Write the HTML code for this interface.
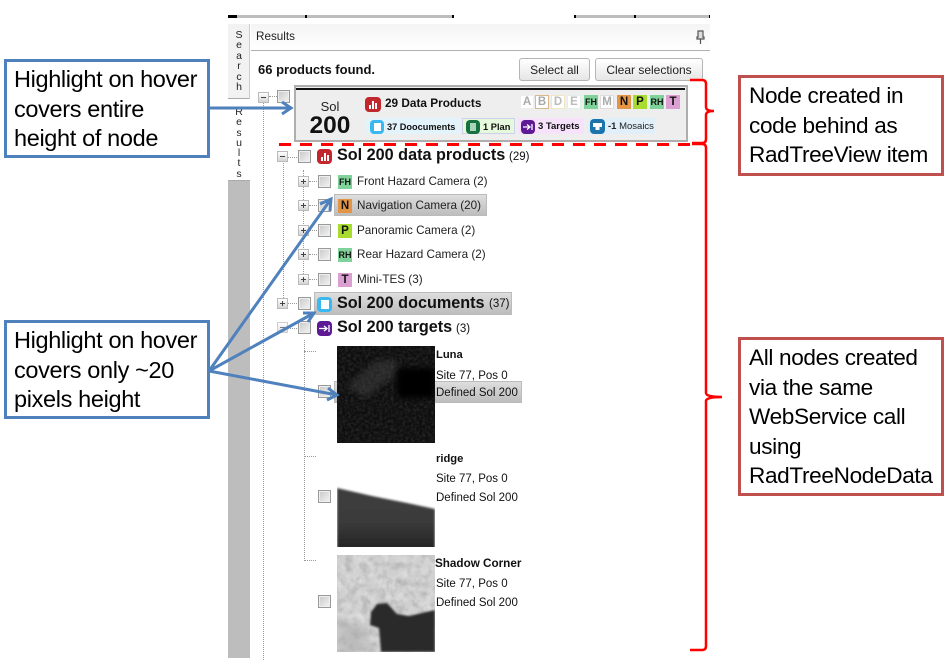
<!DOCTYPE html>
<html><head><meta charset="utf-8"><style>
html,body{margin:0;padding:0;background:#fff}
#p{position:relative;width:952px;height:664px;overflow:hidden;background:#fff;font-family:"Liberation Sans",sans-serif;color:#111}
#p div,#p span.a,#p svg{position:absolute}
.t{white-space:nowrap;line-height:14px}
.s{font-size:11.7px}
.b{font-weight:bold}
.call{box-sizing:border-box;background:#fff;font-size:23.5px;line-height:29.5px;color:#000;padding:3px 0 0 7px;white-space:nowrap;letter-spacing:-.35px}
.rc{font-size:22.6px;padding-left:8px}
.ck{box-sizing:border-box;width:13px;height:13px;border:1px solid #999;background:linear-gradient(135deg,#c8c8c8,#f4f4f4);box-shadow:inset 0 0 0 1px #eee}
.ex{box-sizing:border-box;width:11px;height:11px;border:1px solid #bbb;background:linear-gradient(#fff,#d4d4d4)}
.ex:after{content:"";position:absolute;left:2px;top:4px;width:5px;height:1px;background:#444}
.ex.pl:before{content:"";position:absolute;left:4px;top:2px;width:1px;height:5px;background:#444}
.ic{width:14px;height:14px;font-size:10px;font-weight:bold;text-align:center;line-height:14px;color:#111}
.bd{box-sizing:border-box;width:14px;height:14px;font-size:11.500px;font-weight:bold;text-align:center;line-height:14px;color:#111}
.lt{color:#aaa;background:#fff;line-height:12px}
.hv{box-sizing:border-box;border:1px solid #bbb;background:linear-gradient(#dedede,#bdbdbd)}
.btn{box-sizing:border-box;border:1px solid #b5b5b5;border-radius:3px;background:linear-gradient(#fff,#e6e6e6);font-size:12px;text-align:center;line-height:22px;color:#222}
.chip{height:16px}
.r{border-radius:4px}
.dv{width:0;border-left:1px dotted #999}
.dh{height:0;border-top:1px dotted #999}
</style></head><body><div id="p">

<!-- top strip -->
<div style="left:228px;top:15px;width:225px;height:3px;background:#bdbdbd"></div>
<div style="left:574px;top:15px;width:136px;height:3px;background:#bdbdbd"></div>
<div style="left:228px;top:15px;width:9px;height:3px;background:#000"></div>
<div style="left:305px;top:15px;width:2px;height:3px;background:#000"></div>
<div style="left:452px;top:15px;width:2px;height:3px;background:#000"></div>
<div style="left:574px;top:15px;width:2px;height:3px;background:#000"></div>
<div style="left:634px;top:15px;width:2px;height:3px;background:#000"></div>
<div style="left:709px;top:15px;width:1px;height:3px;background:#000"></div>

<!-- side rail -->
<div style="left:228px;top:24px;width:22px;height:634px;background:#bdbdbd"></div>
<div style="left:228px;top:24px;width:21px;height:74px;background:#f2f2f2"></div>
<div style="left:228px;top:98px;width:21px;height:1px;background:#aaa"></div>
<div style="left:228px;top:99px;width:22px;height:81px;background:#fff"></div>
<div style="left:228px;top:180px;width:22px;height:1px;background:#aaa"></div>
<div style="left:249px;top:24px;width:1px;height:75px;background:#ccc"></div>
<div style="left:228px;top:30px;width:22px;text-align:center;font-size:10.500px;line-height:10.400px;color:#222">S<br>e<br>a<br>r<br>c<br>h</div>
<div style="left:228px;top:107px;width:22px;text-align:center;font-size:10.500px;line-height:10.300px;color:#222">R<br>e<br>s<br>u<br>l<br>t<br>s</div>

<!-- header -->
<div style="left:251px;top:24px;width:459px;height:26px;background:linear-gradient(#f4f4f4,#fff)"></div>
<div style="left:251px;top:50px;width:459px;height:1px;background:#b0b0b0"></div>
<div class="t" style="left:256px;top:30px;font-size:11.700px;color:#222">Results</div>
<svg style="left:695px;top:30px" width="11" height="15" viewBox="0 0 11 15"><path d="M3 1h5v6h1v2H2V7h1zM5.500 9v5" fill="#ddd" stroke="#555" stroke-width="1.200"/></svg>

<div class="t b" style="left:258px;top:63px;font-size:13px">66 products found.</div>
<div class="btn" style="left:519px;top:58px;width:71px;height:23px">Select all</div>
<div class="btn" style="left:595px;top:58px;width:108px;height:23px">Clear selections</div>

<!-- dotted tree lines -->
<div class="dv" style="left:263px;top:103px;height:557px"></div>
<div class="dh" style="left:269px;top:96px;width:8px"></div>
<div class="dv" style="left:283px;top:163px;height:135px"></div>
<div class="dh" style="left:288px;top:157px;width:9px"></div>
<div class="dh" style="left:288px;top:303px;width:9px"></div>
<div class="dh" style="left:288px;top:328px;width:9px"></div>
<div class="dv" style="left:303px;top:170px;height:110px"></div>
<div class="dh" style="left:309px;top:181px;width:8px"></div>
<div class="dh" style="left:309px;top:205px;width:8px"></div>
<div class="dh" style="left:309px;top:230px;width:8px"></div>
<div class="dh" style="left:309px;top:254px;width:8px"></div>
<div class="dh" style="left:309px;top:279px;width:8px"></div>
<div class="dv" style="left:304px;top:340px;height:221px"></div>
<div class="dh" style="left:304px;top:351px;width:12px"></div>
<div class="dh" style="left:304px;top:456px;width:12px"></div>
<div class="dh" style="left:304px;top:560px;width:12px"></div>

<!-- root node -->
<div class="ex" style="left:258px;top:92px"></div>
<div class="ck" style="left:277px;top:90px"></div>
<div style="box-sizing:border-box;left:294px;top:85px;width:394px;height:57px;border:2px solid #aeaeae;background:#eee"></div>
<div style="left:296px;top:88px;width:389px;height:2px;background:#111"></div>
<div class="t" style="left:296px;top:100px;width:68px;text-align:center;font-size:13px;color:#222">Sol</div>
<div class="t b" style="left:296px;top:116px;width:68px;text-align:center;font-size:24.500px;line-height:19px">200</div>

<div class="r" style="left:365px;top:97px;width:16px;height:15px;background:#c1272d"></div>
<svg style="left:365px;top:97px" width="16" height="15"><path d="M4 8h2v4H4zM7 4h2v8H7zM10 6h2v6h-2z" fill="#fff"/></svg>
<div class="t b" style="left:385px;top:96px;font-size:11.800px">29 Data Products</div>

<div class="bd lt" style="left:520px;top:95px;border:1px solid #eee">A</div>
<div class="bd lt" style="left:535px;top:95px;border:1px solid #d9b98c">B</div>
<div class="bd lt" style="left:551px;top:95px;border:1px solid #efe6c4;color:#bbb">D</div>
<div class="bd lt" style="left:567px;top:95px;border:1px solid #dff0ea;color:#bbb">E</div>
<div class="bd" style="left:584px;top:95px;background:#7fd39a;font-size:9px">FH</div>
<div class="bd lt" style="left:600px;top:95px;border:1px solid #ddd">M</div>
<div class="bd" style="left:617px;top:95px;background:#e39445">N</div>
<div class="bd" style="left:633px;top:95px;background:#a8dc2e">P</div>
<div class="bd" style="left:650px;top:95px;background:#7fd39a;font-size:9px">RH</div>
<div class="bd" style="left:666px;top:95px;background:#dc9fd2">T</div>

<div class="chip" style="left:366px;top:118px;width:94px;background:#e2f3fb"></div>
<div class="chip" style="box-sizing:border-box;left:462px;top:118px;width:53px;background:#e6f9dc;border:1px solid #ccd0e8"></div>
<div class="chip" style="left:518px;top:118px;width:66px;background:#f6e3fb"></div>
<div class="chip" style="left:587px;top:118px;width:68px;background:#e0eff8"></div>

<div class="r" style="left:370px;top:120px;width:14px;height:14px;background:#3cb8f0"></div>
<div style="left:374px;top:123px;width:7px;height:8px;background:#fff"></div>
<div class="t b" style="left:387px;top:120px;font-size:9.200px">37 Doocuments</div>
<div class="r" style="left:466px;top:120px;width:14px;height:14px;background:#17703f"></div>
<div style="left:470px;top:123px;width:6px;height:8px;background:#a9d6b8"></div>
<div class="t b" style="left:483px;top:120px;font-size:9.300px">1 Plan</div>
<div class="r" style="left:521px;top:120px;width:14px;height:14px;background:#5e1a94"></div>
<svg style="left:521px;top:120px" width="14" height="14"><path d="M2 7h6M6 4.500l3 2.500-3 2.500M11 4v6" fill="none" stroke="#fff" stroke-width="1.300"/></svg>
<div class="t b" style="left:538px;top:120px;font-size:9.500px">3 Targets</div>
<div class="r" style="left:590px;top:119px;width:15px;height:15px;background:#1c74ad"></div>
<svg style="left:590px;top:119px" width="15" height="15"><path d="M3 4h9v4H9.500v3h-4V8H3z" fill="#fff"/></svg>
<div class="t" style="left:608px;top:120px;font-size:9.500px;color:#222"><b>-1</b> Mosaics</div>

<!-- data products -->
<div class="ex" style="left:277px;top:151px"></div>
<div class="ck" style="left:298px;top:150px"></div>
<div class="r" style="left:317px;top:149px;width:15px;height:15px;background:#c1272d"></div>
<svg style="left:317px;top:149px" width="15" height="15"><path d="M4 8h2v4H4zM7 4h2v8H7zM10 6h2v6h-2z" fill="#fff"/></svg>
<div class="t b" style="left:337px;top:147px;font-size:16.200px;line-height:16px">Sol 200 data products</div>
<div class="t" style="left:509px;top:150px;font-size:11.500px">(29)</div>

<div class="ex pl" style="left:298px;top:176px"></div><div class="ck" style="left:318px;top:175px"></div>
<div class="ic" style="left:338px;top:175px;background:#7fd39a;font-size:9px">FH</div>
<div class="t s" style="left:357px;top:175px;color:#222">Front Hazard Camera (2)</div>

<div class="hv" style="left:334px;top:194px;width:153px;height:22px"></div>
<div class="ex pl" style="left:298px;top:200px"></div><div class="ck" style="left:318px;top:199px"></div>
<div class="ic" style="left:338px;top:199px;background:#e39445;font-size:11.500px">N</div>
<div class="t s" style="left:357px;top:199px;color:#222">Navigation Camera (20)</div>

<div class="ex pl" style="left:298px;top:225px"></div><div class="ck" style="left:318px;top:224px"></div>
<div class="ic" style="left:338px;top:224px;background:#a8dc2e;font-size:11.500px">P</div>
<div class="t s" style="left:357px;top:224px;color:#222">Panoramic Camera (2)</div>

<div class="ex pl" style="left:298px;top:249px"></div><div class="ck" style="left:318px;top:248px"></div>
<div class="ic" style="left:338px;top:248px;background:#7fd39a;font-size:9px">RH</div>
<div class="t s" style="left:357px;top:248px;color:#222">Rear Hazard Camera (2)</div>

<div class="ex pl" style="left:298px;top:274px"></div><div class="ck" style="left:318px;top:273px"></div>
<div class="ic" style="left:338px;top:273px;background:#dc9fd2;font-size:11.500px">T</div>
<div class="t s" style="left:357px;top:273px;color:#222">Mini-TES (3)</div>

<!-- documents -->
<div class="hv" style="left:314px;top:292px;width:198px;height:23px"></div>
<div class="ex pl" style="left:277px;top:298px"></div><div class="ck" style="left:298px;top:297px"></div>
<div class="r" style="left:317px;top:297px;width:15px;height:15px;background:#3cb8f0"></div>
<div style="left:321px;top:300px;width:8px;height:9px;background:#fff"></div>
<div class="t b" style="left:337px;top:295px;font-size:16.200px;line-height:16px">Sol 200 documents</div>
<div class="t" style="left:489px;top:297px;font-size:11.500px">(37)</div>

<!-- targets -->
<div class="ex" style="left:277px;top:322px;opacity:.7"></div><div class="ck" style="left:298px;top:321px"></div>
<div class="r" style="left:317px;top:321px;width:15px;height:15px;background:#5e1a94"></div>
<svg style="left:317px;top:321px" width="15" height="15"><path d="M2 7.500h7M7 5l3 2.500L7 10M12 4v7" fill="none" stroke="#fff" stroke-width="1.300"/></svg>
<div class="t b" style="left:337px;top:319px;font-size:16.200px;line-height:16px">Sol 200 targets</div>
<div class="t" style="left:456px;top:322px;font-size:11.500px">(3)</div>

<div class="hv" style="left:334px;top:381px;width:188px;height:22px"></div>
<div class="ck" style="left:318px;top:385px"></div>
<div class="ck" style="left:318px;top:490px"></div>
<div class="ck" style="left:318px;top:595px"></div>

<svg style="left:337px;top:346px" width="98" height="306" viewBox="0 0 98 306">
<defs>
<filter id="n" x="0" y="0" width="100%" height="100%"><feTurbulence type="fractalNoise" baseFrequency=".35" numOctaves="3" seed="4"/><feColorMatrix values="0 0 0 0 1 0 0 0 0 1 0 0 0 0 1 1.200 0 0 0 -.42"/></filter>
<filter id="n2" x="0" y="0" width="100%" height="100%"><feTurbulence type="fractalNoise" baseFrequency=".09" numOctaves="4" seed="9"/><feColorMatrix values="0 0 0 0 1 0 0 0 0 1 0 0 0 0 1 2.200 0 0 0 -.85"/></filter>
<filter id="n3" x="0" y="0" width="100%" height="100%"><feTurbulence type="fractalNoise" baseFrequency=".12" numOctaves="4" seed="3"/><feColorMatrix values="0 0 0 0 0 0 0 0 0 0 0 0 0 0 0 2.400 0 0 0 -1"/></filter>
<filter id="bl"><feGaussianBlur stdDeviation="1"/></filter>
<filter id="bl3"><feGaussianBlur stdDeviation="3"/></filter>
<linearGradient id="rg" x1="0" y1="0" x2="0" y2="1"><stop offset="0" stop-color="#3f3f3f"/><stop offset=".55" stop-color="#3a3a3a"/><stop offset="1" stop-color="#222"/></linearGradient>
<clipPath id="c1"><rect width="98" height="97"/></clipPath>
<clipPath id="c2"><rect y="105" width="98" height="96"/></clipPath>
<clipPath id="c3"><rect y="209" width="98" height="97"/></clipPath>
</defs>
<rect width="98" height="97" fill="#0e0e0e"/>
<g clip-path="url(#c1)"><rect width="98" height="97" filter="url(#n)" opacity=".17"/>
<path d="M10 40L40 14l20 0 0 14L28 52z" fill="#555" opacity=".35" filter="url(#bl3)"/>
<rect x="60" y="22" width="38" height="30" fill="#000" filter="url(#bl3)"/></g>
<rect y="105" width="98" height="96" fill="#fff"/>
<g clip-path="url(#c2)"><path d="M0 142L35 150 70 157 98 163V205H0z" fill="url(#rg)" filter="url(#bl)"/></g>
<rect y="209" width="98" height="97" fill="#cfcfcf"/>
<g clip-path="url(#c3)"><rect y="209" width="98" height="97" filter="url(#n2)" opacity=".35"/>
<rect y="209" width="98" height="97" filter="url(#n3)" opacity=".12"/>
<path d="M0 270L30 285 34 306H0z" fill="#aaa" opacity=".5" filter="url(#bl3)"/>
<path d="M34 266L40 258 50 257 60 268 72 270 98 264V306H44L42 282 33 279z" fill="#2c2c2c" filter="url(#bl)"/></g>
</svg>

<div class="t b" style="left:436px;top:348px;font-size:11.200px">Luna</div>
<div class="t" style="left:436px;top:369px;font-size:11.500px">Site 77, Pos 0</div>
<div class="t" style="left:436px;top:386px;font-size:11.500px">Defined Sol 200</div>
<div class="t b" style="left:436px;top:452px;font-size:11.200px">ridge</div>
<div class="t" style="left:436px;top:472px;font-size:11.500px">Site 77, Pos 0</div>
<div class="t" style="left:436px;top:491px;font-size:11.500px">Defined Sol 200</div>
<div class="t b" style="left:435px;top:557px;font-size:11.700px">Shadow Corner</div>
<div class="t" style="left:436px;top:577px;font-size:11.500px">Site 77, Pos 0</div>
<div class="t" style="left:436px;top:596px;font-size:11.500px">Defined Sol 200</div>

<!-- overlays -->
<svg style="left:0;top:0" width="952" height="664" viewBox="0 0 952 664" fill="none">
<line x1="279" y1="144.500" x2="696" y2="144.500" stroke="#f00" stroke-width="3" stroke-dasharray="12 9"/>
<path d="M690 80H702Q706 80 706 84V107Q706 111 714 111Q706 111 706 115V139Q706 143 702 143H692" stroke="#f00" stroke-width="2.500"/>
<path d="M692 144H702Q706 144 706 148V393Q706 397 722 397Q706 397 706 401V646Q706 650 702 650H690" stroke="#f00" stroke-width="2.500"/>
<g stroke="#4f81bd" stroke-width="3" stroke-linejoin="miter">
<path d="M209 108H291M282 102L291 108 282 114"/>
<path d="M209 371L331 199M320 204L331 199 330 211"/>
<path d="M209 371L314 313M303 313L314 313 308 322"/>
<path d="M209 371L337 395M328 388L337 395 327 400"/>
</g>
</svg>

<!-- callouts -->
<div class="call" style="left:4px;top:59px;width:206px;height:99px;border:3px solid #4f81bd">Highlight on hover<br>covers entire<br>height of node</div>
<div class="call" style="left:4px;top:320px;width:206px;height:99px;border:3px solid #4f81bd">Highlight on hover<br>covers only ~20<br>pixels height</div>
<div class="call rc" style="left:738px;top:75px;width:206px;height:101px;border:3px solid #c0504d">Node created in<br>code behind as<br>RadTreeView item</div>
<div class="call rc" style="left:738px;top:337px;width:206px;height:159px;border:3px solid #c0504d">All nodes created<br>via the same<br>WebService call<br>using<br>RadTreeNodeData</div>
</div></body></html>
